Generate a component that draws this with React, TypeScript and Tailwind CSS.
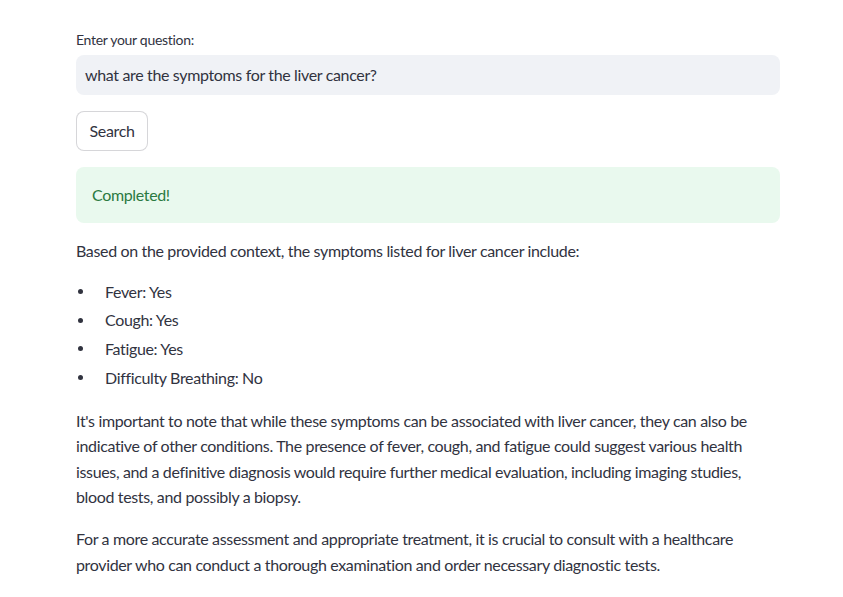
export default function App() {
    const items = ['Fever: Yes', 'Cough: Yes', 'Fatigue: Yes', 'Difficulty Breathing: No'];

    return (
        <div className="min-h-[597px] bg-white text-[#31333f] font-['Lato','Liberation_Sans',sans-serif] tracking-[-0.35px]">
            <div className="w-[704px] ml-[76px] pt-[30px] flex flex-col gap-4">
                <div>
                    <label className="block text-sm leading-[20px] mb-[5px] tracking-[-0.3px]">Enter your question:</label>
                    <div className="h-10 rounded-lg bg-[#f0f2f6] flex items-center px-[9px] text-base">
                        what are the symptoms for the liver cancer?
                    </div>
                </div>

                <div>
                    <button className="h-10 px-3 w-[72px] rounded-lg border border-[#31333f]/20 bg-white text-base">
                        Search
                    </button>
                </div>

                <div className="h-14 rounded-lg bg-[#e9f9ee] flex items-center px-4 text-base text-[#2b7a42]">
                    Completed!
                </div>

                <div className="text-base leading-[25.6px] -mt-px">
                    <p className="mb-4">Based on the provided context, the symptoms listed for liver cancer include:</p>
                    <ul className="mb-[17px] -mt-px">
                        {items.map((item, i) => (
                            <li key={item} className={`flex items-center ${i > 0 ? 'mt-[3.2px]' : ''}`}>
                                <span className="w-[5px] h-[5px] rounded-full bg-[#31333f] ml-[2px] mr-[22px]" />
                                {item}
                            </li>
                        ))}
                    </ul>
                    <p className="mb-4">
                        It's important to note that while these symptoms can be associated with liver cancer, they can also be
                        <br />
                        indicative of other conditions. The presence of fever, cough, and fatigue could suggest various health
                        <br />
                        issues, and a definitive diagnosis would require further medical evaluation, including imaging studies,
                        <br />
                        blood tests, and possibly a biopsy.
                    </p>
                    <p>
                        For a more accurate assessment and appropriate treatment, it is crucial to consult with a healthcare
                        <br />
                        provider who can conduct a thorough examination and order necessary diagnostic tests.
                    </p>
                </div>
            </div>
        </div>
    );
}
